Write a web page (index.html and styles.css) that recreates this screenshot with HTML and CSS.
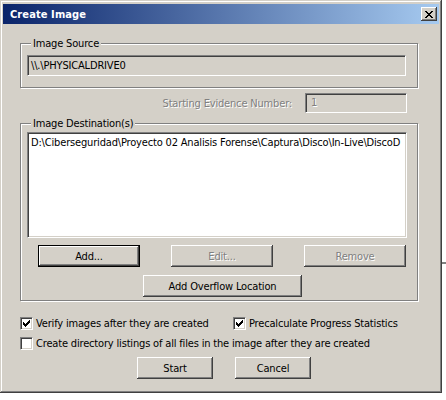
FILE: index.html
```html
<!DOCTYPE html>
<html>
<head>
<meta charset="utf-8">
<title>Create Image</title>
<link rel="stylesheet" href="styles.css">
</head>
<body>
<div class="window">
  <div class="titlebar">
    <span class="title">Create Image</span>
    <span class="close"><svg width="8" height="7" viewBox="0 0 8 7" shape-rendering="crispEdges"><path fill="#000" d="M0 0h2v1H0zM6 0h2v1H6zM1 1h2v1H1zM5 1h2v1H5zM2 2h4v1H2zM3 3h2v1H3zM2 4h4v1H2zM1 5h2v1H1zM5 5h2v1H5zM0 6h2v1H0zM6 6h2v1H6z"/></svg></span>
  </div>
  <div class="content">
    <div class="group group-source">
      <div class="group-label">Image Source</div>
      <div class="textbox source-box">\\.\PHYSICALDRIVE0</div>
    </div>
    <div class="evidence-row">
      <span class="disabled-text evidence-label">Starting Evidence Number:</span>
      <div class="textbox evidence-box disabled-text">1</div>
    </div>
    <div class="group group-dest">
      <div class="group-label">Image Destination(s)</div>
      <div class="listbox">
        <div class="list-item">D:\Ciberseguridad\Proyecto 02 Analisis Forense\Captura\Disco\In-Live\DiscoD</div>
      </div>
      <div class="btn-row">
        <button class="btn btn-default">Add...</button>
        <button class="btn" disabled>Edit...</button>
        <button class="btn" disabled>Remove</button>
      </div>
      <div class="overflow-row">
        <button class="btn btn-wide">Add Overflow Location</button>
      </div>
    </div>
    <div class="check-row first-checks">
      <label class="check check-verify"><span class="cb"><svg width="7" height="7" viewBox="0 0 7 7" shape-rendering="crispEdges"><path fill="#000" d="M6 0h1v1H6zM5 1h2v1H5zM0 2h1v1H0zM4 2h3v1H4zM0 3h2v1H0zM3 3h3v1H3zM0 4h5v1H0zM1 5h3v1H1zM2 6h1v1H2z"/></svg></span><span class="check-text">Verify images after they are created</span></label>
      <label class="check"><span class="cb"><svg width="7" height="7" viewBox="0 0 7 7" shape-rendering="crispEdges"><path fill="#000" d="M6 0h1v1H6zM5 1h2v1H5zM0 2h1v1H0zM4 2h3v1H4zM0 3h2v1H0zM3 3h3v1H3zM0 4h5v1H0zM1 5h3v1H1zM2 6h1v1H2z"/></svg></span><span class="check-text">Precalculate Progress Statistics</span></label>
    </div>
    <div class="check-row second-checks">
      <label class="check"><span class="cb"></span><span class="check-text">Create directory listings of all files in the image after they are created</span></label>
    </div>
    <div class="action-row">
      <button class="btn btn-action">Start</button>
      <button class="btn btn-action">Cancel</button>
    </div>
  </div>
</div>
</body>
</html>
```
FILE: styles.css
```css
html {
  background: #fff linear-gradient(to bottom, #fff 262px, #808080 262px, #808080 264px, #fff 264px) no-repeat;
  background-size: 100% 400px;
}
body {
  margin: 0;
  font-family: "DejaVu Sans Condensed", "Liberation Sans", sans-serif;
  font-size: 11px;
  line-height: 13px;
  letter-spacing: -0.17px;
  color: #000;
}
.window {
  width: 442px;
  height: 393px;
  box-sizing: border-box;
  background: #d4d0c8;
  padding: 4px 3px 3px 3px;
  box-shadow: inset -1px -1px #404040, inset 1px 1px #d4d0c8, inset -2px -2px #808080, inset 2px 2px #fff;
}
.titlebar {
  height: 20px;
  background: linear-gradient(to right, #0a246a, #a6caf0);
  display: flex;
  align-items: center;
  justify-content: space-between;
  padding: 0 2px 0 7px;
}
.title {
  color: #fff;
  font-weight: bold;
  font-size: 11px;
  letter-spacing: 0.1px;
}
.close {
  width: 16px;
  height: 14px;
  box-sizing: border-box;
  background: #d4d0c8;
  box-shadow: inset -1px -1px #404040, inset 1px 1px #fff, inset -2px -2px #808080;
  display: flex;
  align-items: center;
  justify-content: center;
}
.close svg { display: block; margin-left: -1px; }
.content {
  padding-left: 17px;
}
.group {
  width: 398px;
  box-sizing: border-box;
  border: 1px solid #808080;
  box-shadow: 1px 1px 0 #fff, inset 1px 1px 0 #fff;
  padding: 0 6px;
}
.group-label {
  width: fit-content;
  margin: -7px 0 0 4px;
  padding: 0 2px;
  background: #d4d0c8;
  line-height: 13px;
}
.group-source {
  margin-top: 19px;
  padding-bottom: 11px;
}
.textbox {
  box-sizing: border-box;
  border: 1px solid;
  border-color: #808080 #fff #fff #808080;
  box-shadow: inset 1px 1px #404040, inset -1px -1px #d4d0c8;
  background: #d4d0c8;
  padding: 0 3px;
  white-space: nowrap;
}
.source-box {
  margin-top: 5px;
  width: 379px;
  height: 21px;
  line-height: 19px;
}
.evidence-row {
  width: 398px;
  margin-top: 5px;
  padding-right: 11px;
  box-sizing: border-box;
  display: flex;
  justify-content: flex-end;
  align-items: center;
}
.evidence-label { margin-right: 13px; }
.evidence-box {
  width: 102px;
  height: 20px;
  line-height: 18px;
  padding-left: 5px;
}
.disabled-text {
  color: #808080;
  text-shadow: 1px 1px 0 #fff;
}
.group-dest {
  margin-top: 10px;
  padding-bottom: 3px;
}
.listbox {
  margin-top: 2px;
  width: 380px;
  height: 106px;
  box-sizing: border-box;
  border: 1px solid;
  border-color: #808080 #fff #fff #808080;
  box-shadow: inset 1px 1px #404040, inset -1px -1px #d4d0c8;
  background: #fff;
  padding: 3px 1px 0 3px;
  overflow: hidden;
}
.list-item { white-space: nowrap; overflow: hidden; }
.btn {
  box-sizing: border-box;
  height: 22px;
  margin: 0;
  padding: 0;
  border: none;
  background: #d4d0c8;
  font: inherit;
  letter-spacing: inherit;
  color: #000;
  box-shadow: inset -1px -1px #404040, inset 1px 1px #fff, inset -2px -2px #808080;
}
.btn:disabled {
  color: #808080;
  text-shadow: 1px 1px 0 #fff;
}
.btn-default {
  box-shadow: inset 0 0 0 1px #000, inset -2px -2px #404040, inset 2px 2px #fff, inset -3px -3px #808080;
}
.btn-row {
  margin-top: 7px;
  padding-left: 11px;
  display: grid;
  grid-template-columns: 102px 102px 102px;
  column-gap: 31px;
}
.overflow-row {
  margin-top: 8px;
  padding-left: 116px;
}
.btn-wide { width: 159px; }
.check-row {
  display: flex;
  align-items: center;
  height: 13px;
}
.first-checks { margin-top: 16px; }
.second-checks { margin-top: 7px; }
.check {
  display: flex;
  align-items: center;
}
.check-verify { width: 213px; }
.cb {
  width: 13px;
  height: 13px;
  box-sizing: border-box;
  flex: none;
  background: #fff;
  border: 1px solid;
  border-color: #808080 #fff #fff #808080;
  box-shadow: inset 1px 1px #404040, inset -1px -1px #d4d0c8;
  display: flex;
  align-items: center;
  justify-content: center;
}
.cb svg { display: block; }
.check-text { margin-left: 3px; white-space: nowrap; }
.action-row {
  margin-top: 7px;
  padding-left: 117px;
  display: flex;
  column-gap: 22px;
}
.btn-action { width: 76px; }
```
